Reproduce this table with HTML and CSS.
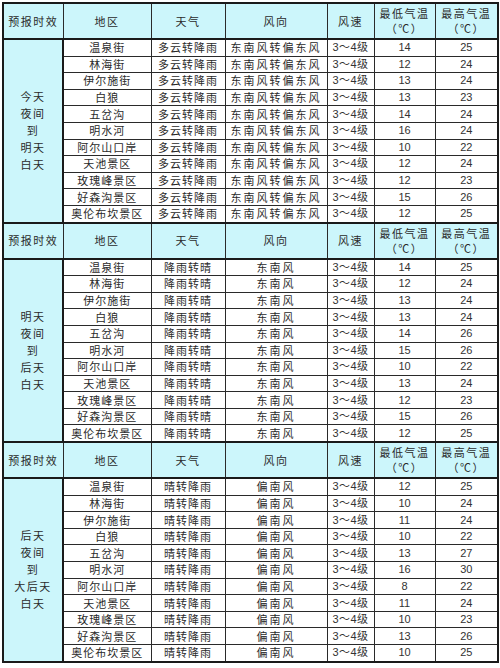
FILE: index.html
```html
<!DOCTYPE html>
<html lang="zh-CN">
<head>
<meta charset="utf-8">
<title>天气预报</title>
<link rel="stylesheet" href="styles.css">
</head>
<body>
<div class="page">
<table class="fc">
  <colgroup>
    <col class="c1"><col class="c2"><col class="c3"><col class="c4"><col class="c5"><col class="c6"><col class="c7">
  </colgroup>
  <tbody>
    <tr class="head">
      <th>预报时效</th><th>地区</th><th>天气</th><th>风向</th><th>风速</th><th>最低气温<br>（℃）</th><th>最高气温<br>（℃）</th>
    </tr>
    <tr><td class="period" rowspan="11">今天<br>夜间<br>到<br>明天<br>白天</td><td class="zh">温泉街</td><td class="zh">多云转降雨</td><td class="zh wd">东南风转偏东风</td><td class="ws">3～4级</td><td class="num">14</td><td class="num">25</td></tr>
    <tr><td class="zh">林海街</td><td class="zh">多云转降雨</td><td class="zh wd">东南风转偏东风</td><td class="ws">3～4级</td><td class="num">12</td><td class="num">24</td></tr>
    <tr><td class="zh">伊尔施街</td><td class="zh">多云转降雨</td><td class="zh wd">东南风转偏东风</td><td class="ws">3～4级</td><td class="num">13</td><td class="num">24</td></tr>
    <tr><td class="zh">白狼</td><td class="zh">多云转降雨</td><td class="zh wd">东南风转偏东风</td><td class="ws">3～4级</td><td class="num">13</td><td class="num">23</td></tr>
    <tr><td class="zh">五岔沟</td><td class="zh">多云转降雨</td><td class="zh wd">东南风转偏东风</td><td class="ws">3～4级</td><td class="num">14</td><td class="num">24</td></tr>
    <tr><td class="zh">明水河</td><td class="zh">多云转降雨</td><td class="zh wd">东南风转偏东风</td><td class="ws">3～4级</td><td class="num">16</td><td class="num">24</td></tr>
    <tr><td class="zh">阿尔山口岸</td><td class="zh">多云转降雨</td><td class="zh wd">东南风转偏东风</td><td class="ws">3～4级</td><td class="num">10</td><td class="num">22</td></tr>
    <tr><td class="zh">天池景区</td><td class="zh">多云转降雨</td><td class="zh wd">东南风转偏东风</td><td class="ws">3～4级</td><td class="num">12</td><td class="num">24</td></tr>
    <tr><td class="zh">玫瑰峰景区</td><td class="zh">多云转降雨</td><td class="zh wd">东南风转偏东风</td><td class="ws">3～4级</td><td class="num">12</td><td class="num">23</td></tr>
    <tr><td class="zh">好森沟景区</td><td class="zh">多云转降雨</td><td class="zh wd">东南风转偏东风</td><td class="ws">3～4级</td><td class="num">15</td><td class="num">26</td></tr>
    <tr><td class="zh">奥伦布坎景区</td><td class="zh">多云转降雨</td><td class="zh wd">东南风转偏东风</td><td class="ws">3～4级</td><td class="num">12</td><td class="num">25</td></tr>

    <tr class="head">
      <th>预报时效</th><th>地区</th><th>天气</th><th>风向</th><th>风速</th><th>最低气温<br>（℃）</th><th>最高气温<br>（℃）</th>
    </tr>
    <tr><td class="period" rowspan="11">明天<br>夜间<br>到<br>后天<br>白天</td><td class="zh">温泉街</td><td class="zh">降雨转晴</td><td class="zh wd">东南风</td><td class="ws">3～4级</td><td class="num">14</td><td class="num">25</td></tr>
    <tr><td class="zh">林海街</td><td class="zh">降雨转晴</td><td class="zh wd">东南风</td><td class="ws">3～4级</td><td class="num">12</td><td class="num">24</td></tr>
    <tr><td class="zh">伊尔施街</td><td class="zh">降雨转晴</td><td class="zh wd">东南风</td><td class="ws">3～4级</td><td class="num">13</td><td class="num">24</td></tr>
    <tr><td class="zh">白狼</td><td class="zh">降雨转晴</td><td class="zh wd">东南风</td><td class="ws">3～4级</td><td class="num">13</td><td class="num">24</td></tr>
    <tr><td class="zh">五岔沟</td><td class="zh">降雨转晴</td><td class="zh wd">东南风</td><td class="ws">3～4级</td><td class="num">14</td><td class="num">26</td></tr>
    <tr><td class="zh">明水河</td><td class="zh">降雨转晴</td><td class="zh wd">东南风</td><td class="ws">3～4级</td><td class="num">15</td><td class="num">26</td></tr>
    <tr><td class="zh">阿尔山口岸</td><td class="zh">降雨转晴</td><td class="zh wd">东南风</td><td class="ws">3～4级</td><td class="num">10</td><td class="num">22</td></tr>
    <tr><td class="zh">天池景区</td><td class="zh">降雨转晴</td><td class="zh wd">东南风</td><td class="ws">3～4级</td><td class="num">13</td><td class="num">24</td></tr>
    <tr><td class="zh">玫瑰峰景区</td><td class="zh">降雨转晴</td><td class="zh wd">东南风</td><td class="ws">3～4级</td><td class="num">12</td><td class="num">23</td></tr>
    <tr><td class="zh">好森沟景区</td><td class="zh">降雨转晴</td><td class="zh wd">东南风</td><td class="ws">3～4级</td><td class="num">15</td><td class="num">26</td></tr>
    <tr><td class="zh">奥伦布坎景区</td><td class="zh">降雨转晴</td><td class="zh wd">东南风</td><td class="ws">3～4级</td><td class="num">12</td><td class="num">25</td></tr>

    <tr class="head">
      <th>预报时效</th><th>地区</th><th>天气</th><th>风向</th><th>风速</th><th>最低气温<br>（℃）</th><th>最高气温<br>（℃）</th>
    </tr>
    <tr><td class="period" rowspan="11">后天<br>夜间<br>到<br>大后天<br>白天</td><td class="zh">温泉街</td><td class="zh">晴转降雨</td><td class="zh wd">偏南风</td><td class="ws">3～4级</td><td class="num">12</td><td class="num">25</td></tr>
    <tr><td class="zh">林海街</td><td class="zh">晴转降雨</td><td class="zh wd">偏南风</td><td class="ws">3～4级</td><td class="num">10</td><td class="num">24</td></tr>
    <tr><td class="zh">伊尔施街</td><td class="zh">晴转降雨</td><td class="zh wd">偏南风</td><td class="ws">3～4级</td><td class="num">11</td><td class="num">24</td></tr>
    <tr><td class="zh">白狼</td><td class="zh">晴转降雨</td><td class="zh wd">偏南风</td><td class="ws">3～4级</td><td class="num">10</td><td class="num">22</td></tr>
    <tr><td class="zh">五岔沟</td><td class="zh">晴转降雨</td><td class="zh wd">偏南风</td><td class="ws">3～4级</td><td class="num">13</td><td class="num">27</td></tr>
    <tr><td class="zh">明水河</td><td class="zh">晴转降雨</td><td class="zh wd">偏南风</td><td class="ws">3～4级</td><td class="num">16</td><td class="num">30</td></tr>
    <tr><td class="zh">阿尔山口岸</td><td class="zh">晴转降雨</td><td class="zh wd">偏南风</td><td class="ws">3～4级</td><td class="num">8</td><td class="num">22</td></tr>
    <tr><td class="zh">天池景区</td><td class="zh">晴转降雨</td><td class="zh wd">偏南风</td><td class="ws">3～4级</td><td class="num">11</td><td class="num">24</td></tr>
    <tr><td class="zh">玫瑰峰景区</td><td class="zh">晴转降雨</td><td class="zh wd">偏南风</td><td class="ws">3～4级</td><td class="num">10</td><td class="num">23</td></tr>
    <tr><td class="zh">好森沟景区</td><td class="zh">晴转降雨</td><td class="zh wd">偏南风</td><td class="ws">3～4级</td><td class="num">13</td><td class="num">26</td></tr>
    <tr><td class="zh">奥伦布坎景区</td><td class="zh">晴转降雨</td><td class="zh wd">偏南风</td><td class="ws">3～4级</td><td class="num">10</td><td class="num">25</td></tr>
  </tbody>
</table>
</div>
</body>
</html>
```

FILE: styles.css
```css
html, body {
  margin: 0;
  padding: 0;
  background: #ffffff;
}

.page {
  padding: 2px 0 0 2px;
}

.fc {
  border-collapse: collapse;
  table-layout: fixed;
  width: 497px;
  border: 2px solid #1a1a1a;
  font-family: "Noto Sans CJK SC", "Noto Sans", sans-serif;
  color: #2a2a2a;
}

.c1 { width: 60px; }
.c2 { width: 88px; }
.c3 { width: 74px; }
.c4 { width: 102px; }
.c5 { width: 47px; }
.c6 { width: 61px; }
.c7 { width: 63px; }

.fc th,
.fc td {
  border: 1px solid #2a2a2a;
  padding: 0;
  text-align: center;
  vertical-align: middle;
  overflow: hidden;
  white-space: nowrap;
}

.head th {
  height: 34px;
  background: #ccf6fb;
  font-weight: normal;
  font-size: 11px;
  line-height: 15px;
  letter-spacing: 1.5px;
  border-top: 2px solid #1a1a1a;
  border-bottom: 2px solid #1a1a1a;
}

.fc td {
  height: 15.6px;
  line-height: 13px;
  font-size: 11px;
}

.period {
  background: #ccf6fb;
  line-height: 17px !important;
  letter-spacing: 1.5px;
  border-right: 2px solid #1a1a1a !important;
}

.zh {
  letter-spacing: 1px;
}

.wd {
  letter-spacing: 2px;
}

.ws,
.num {
  font-family: "Liberation Sans", "DejaVu Sans", sans-serif;
  font-size: 11.5px;
  color: #333;
}

.ws {
  letter-spacing: 0.5px;
}
```
